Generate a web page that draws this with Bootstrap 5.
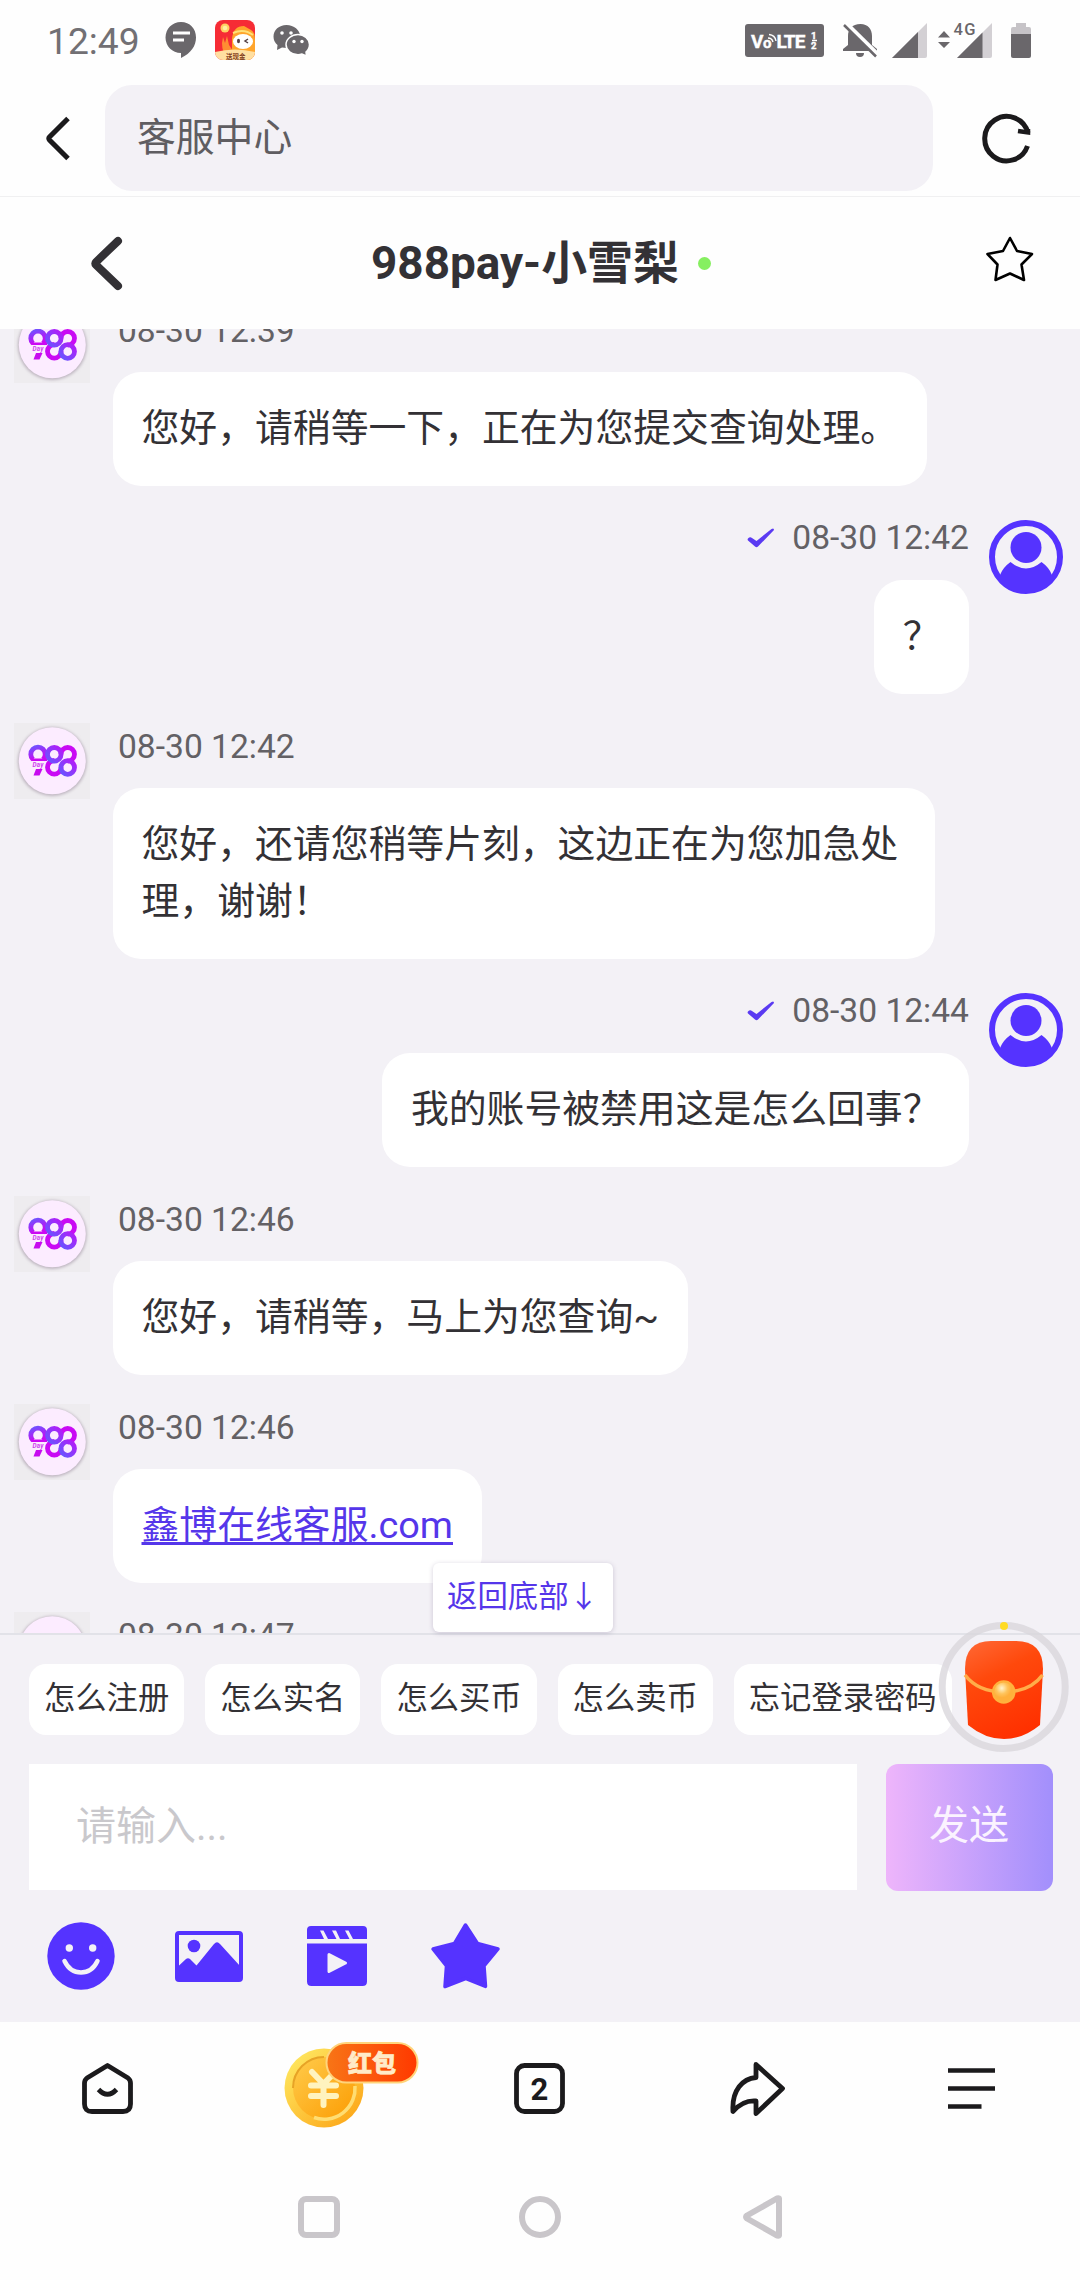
<!DOCTYPE html>
<html lang="zh-CN">
<head>
<meta charset="utf-8">
<meta name="viewport" content="width=device-width, initial-scale=1">
<title>客服中心</title>
<link href="https://cdn.jsdelivr.net/npm/bootstrap@5.3.0/dist/css/bootstrap.min.css" rel="stylesheet">
<style>
:root{--ink:#333135;--brand:#5533ff;--panel:#f3f1f6;--dim:#6a676b}
body{width:1080px;height:2280px;overflow:hidden;background:#fefefe;color:var(--ink);font-family:Roboto,"Noto Sans CJK SC",sans-serif;line-height:1.5}
svg{display:block;flex:none;overflow:visible}
.status-bar{height:85px;padding:20px 49px 0 47px}
.status-time{font-size:37.2px;line-height:42px;padding-top:2px;color:#727074;width:118px}
.status-left,.status-right{height:40px}
.app-icon{margin:0 18px}
.icon-bell{margin-left:19px}
.icon-signal{margin-left:14px}
.icon-data{margin-left:11px}
.icon-battery{margin-left:19px}
.address-row{height:112px;padding-left:46px;border-bottom:1px solid #f0f0f1}
.address-pill{width:828px;height:106px;margin-left:35px;margin-right:49px;border-radius:27px;background:var(--panel);padding-left:32px;font-size:38.8px;line-height:106px;color:#5f5d61}
.address-back{margin-top:32px}
.address-reload{margin-top:28px}
.chat-head{height:132px}
.chat-head .head-back{margin-left:91px;width:280px}
.chat-title{font-size:45.9px;font-weight:700;line-height:132px;width:327px}
.online-dot{width:13px;height:13px;border-radius:50%;background:#86ef60}
.chat-head .head-star{margin-left:275px;margin-top:-9px}
.chat-log{height:1304px;background:var(--panel);overflow:hidden}
.chat-flow{margin-top:-22px;gap:29px}
.msg-in{padding-left:14px;gap:23px}
.msg-out{padding-right:17px;gap:20px}
.msg-out>svg{margin-top:5px}
.msg-time{height:46px;line-height:48px;font-size:33.6px;color:#636165;margin-bottom:19px}
.msg-in .msg-time{padding-left:5px}
.msg-out .msg-time{gap:17px}
.bubble{background:#fff;border-radius:28px;padding:28.5px;font-size:37.85px;line-height:57px;max-width:822px;width:max-content}
.bubble span,.bubble a{position:relative;top:-1px}
.bubble a{color:#5536ea;text-decoration-thickness:3px;text-underline-offset:4px;text-decoration-skip-ink:none}
.chat-panel{height:389px;background:var(--panel);border-top:2px solid #e2e2e8;padding:29px 27px 0 29px}
.to-bottom{left:433px;top:1563px;width:180px;height:69px;border-radius:6px;box-shadow:0 1px 5px rgba(60,40,90,.22);font-size:30.4px;line-height:67px;color:#5536ea;padding-left:14px}
.quick{gap:21px;font-size:31.3px;white-space:nowrap}
.quick div{background:#fff;border-radius:17px;height:71px;line-height:69px;padding:0 15px}
.entry{margin-top:29px;gap:29px}
.entry-box{width:828px;height:126px;background:#fff;padding:0 0 0 47px;font-size:40px;line-height:126px;color:#c9c8cc}
.send-btn{width:167px;height:127px;border:0;border-radius:12px;background:linear-gradient(90deg,#eeb5fb,#a28ffc);color:#fbf3ff;font-size:40px;line-height:122px;padding:0 1px 4px 0}
.tools{margin-top:31px;padding-left:18px;height:68px}
.tool-photo{margin-left:60px}
.tool-video,.tool-star{margin-left:64px}
.app-nav{height:124px;padding:0 0 0 82px}
.nav-home{margin-top:41px}
.nav-coin{margin:20px 0 0 151px}
.nav-tabs-count{margin:41px 0 0 95px}
.nav-share{margin:40px 0 0 165px}
.nav-menu{margin:46px 0 0 162px}
.sys-nav{height:134px;padding:50px 0 0 298px}
.sys-home{margin-left:179px}
.sys-back{margin-left:182px}
.red-pack{left:939px;top:1622px}
svg text{font-family:Roboto,"Noto Sans CJK SC",sans-serif}
</style>
</head>
<body class="position-relative">
<svg width="0" height="0" class="position-absolute">
  <defs>
    <linearGradient id="gRingA" x1="0" y1="0" x2=".4" y2="1"><stop offset="0" stop-color="#7052ff"/><stop offset="1" stop-color="#cb08f2"/></linearGradient>
    <linearGradient id="gRingB" x1="1" y1="0" x2="0" y2="1"><stop offset="0" stop-color="#b51af8"/><stop offset="1" stop-color="#6657ff"/></linearGradient>
    <filter id="soft" x="-20%" y="-20%" width="140%" height="140%"><feGaussianBlur stdDeviation="1.5"/></filter>
    <symbol id="avatar988" viewBox="0 0 76 76">
      <rect width="76" height="76" fill="#eeecef"/>
      <circle cx="38.3" cy="38.5" r="34.5" fill="#bdb4bf" filter="url(#soft)"/>
      <circle cx="38.3" cy="37.7" r="33.500" fill="#fcecff"/>
      <g fill="none" stroke-width="4.800">
        <path d="M40.300 37.500A6.800 6.800 0 1 0 47.100 44.300" stroke="#c90af4"/>
        <path d="M46.900 31.300A6.800 6.800 0 1 1 53.700 38.100" stroke="#c90af4"/>
        <path d="M53.700 37.800Q49 38 46.900 43.500" stroke="#a428fa" stroke-width="3"/>
        <circle cx="53.700" cy="44.500" r="6.800" stroke="url(#gRingB)"/>
        <path d="M19 36.500A7.200 7.200 0 1 1 29 36.500" stroke="url(#gRingA)"/>
        <circle cx="40.300" cy="31.300" r="6.800" stroke="url(#gRingB)"/>
      </g>
      <path d="M16.500 35.500H33V38H18z" fill="#cb08f2"/>
      <path d="M22 46h6.500l-3 6.500h-6z" fill="#c70bef"/>
      <text x="18.400" y="44" font-size="6.500" font-style="italic" font-weight="700" fill="#cf45ee" textLength="11">Day</text>
    </symbol>
    <symbol id="userIcon" viewBox="0 0 74 74">
      <clipPath id="cUser"><circle cx="37" cy="37" r="36"/></clipPath>
      <circle cx="37" cy="37" r="34" fill="none" stroke="#5533ff" stroke-width="6"/>
      <circle cx="37" cy="27.500" r="15.500" fill="#5533ff"/>
      <path clip-path="url(#cUser)" d="M9 61 11.500 54Q14.500 47 21.500 42Q37 55 52.500 42Q59.500 47 62.500 54L65 61V74H9z" fill="#5533ff"/>
    </symbol>
    <symbol id="tick" viewBox="0 0 28 20"><path d="M1 10.500Q3 8.500 5 10L9.500 13 24.500 1Q27-.5 27 2L11 18.500Q9.500 20 8 18.500L1 12.500Q.2 11.500 1 10.500z" fill="#5a3af2"/></symbol>
  </defs>
</svg>

<header class="status-bar d-flex justify-content-between">
  <div class="status-left d-flex align-items-center">
    <div class="status-time">12:49</div>
    <svg width="32" height="36" viewBox="0 0 32 36"><path d="M16 0C25 0 31 6.500 31 15.500C31 24 26 31 16 36V31C7 31 .5 24 .5 15.500S7 0 16 0z" fill="#6a676b"/><path d="M8 11H25M8 18H19" stroke="#fff" stroke-width="3"/></svg>
    <svg class="app-icon" width="40" height="40" viewBox="0 0 40 40"><clipPath id="cApp"><rect width="40" height="40" rx="8"/></clipPath><g clip-path="url(#cApp)"><path fill="#f62c35" d="M0 0h40v40H0z"/><circle cx="10" cy="8" r="4.500" fill="#ffd264"/><circle cx="10" cy="8" r="2.300" fill="#fff1a2"/><path d="M17 40V19Q18 6 29 6L36 10Q40 12 40 20V40z" fill="#ffa52c"/><path d="M7 23 8 17 10 23 12 16 14 25 22 37H13Q7 34 7 23z" fill="#ff8e32"/><path d="M18 13Q29 8 38 15" fill="none" stroke="#ffe078" stroke-width="2"/><ellipse cx="28" cy="21.500" rx="10" ry="7.500" fill="#fff"/><ellipse cx="23.500" cy="21" rx="1.500" ry="2.300" fill="#554247"/><path d="M33 19 30 21 33 23" stroke="#554247" stroke-width="1.500" fill="none"/><path d="M0 32Q20 27 40 32V40H0z" fill="#ffdfa1"/><text x="11" y="38.500" font-size="6.500" font-weight="700" fill="#843e20">送现金</text></g></svg>
    <svg width="37" height="31" viewBox="0 0 37 31"><path fill="#6a676b" d="M13.500 0C21 0 27 5 27 11S21 23 13.500 23L9 22.500 4 25 4.500 20Q.5 17 .5 11.500C.5 5 6 0 13.500 0z"/><path fill="#6a676b" stroke="#fff" stroke-width="1.500" d="M25 9.500C31 9.500 36.500 14 36.500 19.500Q36.500 24 33 27L33.500 31 29 29Q27 29.800 25 29.800C18.500 29.800 13 25 13 19.600S18.500 9.500 25 9.500z"/><g fill="#fff"><circle cx="9" cy="8" r="1.800"/><circle cx="18" cy="8" r="1.800"/><circle cx="21" cy="16.500" r="1.700"/><circle cx="29" cy="16.500" r="1.700"/></g></svg>
  </div>
  <div class="status-right d-flex align-items-center">
    <svg width="79" height="33" viewBox="0 0 79 33"><rect width="79" height="33" rx="3" fill="#6a676b"/><g fill="#fff" stroke="#fff" stroke-width=".4" font-weight="700"><text x="6" y="24" font-size="19" textLength="12">V</text><text x="18" y="24" font-size="15">o</text><text x="31.500" y="24" font-size="19" textLength="29">LTE</text><text x="66" y="15" font-size="9.500">1</text><text x="66" y="25" font-size="9.500">2</text></g><path d="M67 16.500H72M23 14Q27 14 28 18M24 10.500Q30 11 31 17" stroke="#fff" fill="none" stroke-width="1.400"/></svg>
    <svg class="icon-bell" width="35" height="35" viewBox="0 0 35 35"><path d="M17.500 1C25 1 29 6 29 13V22L34 26V28H0V26L5 22V13C5 6 9 1 17.500 1zM13 30H21Q21 34 17 34T13 30z" fill="#6a676b"/><path d="M3 0 35 31.500" stroke="#fff" stroke-width="4"/><path d="M1 2 33 33.500" stroke="#6a676b" stroke-width="2.500"/></svg>
    <svg class="icon-signal" width="35" height="35" viewBox="0 0 35 35"><path d="M0 35 35 0V33Q35 35 33 35z" fill="#d3d0d4"/><path d="M0 35 26 9V35z" fill="#6a676b"/></svg>
    <svg class="icon-data" width="54" height="35" viewBox="0 0 54 35"><path d="M0 14.500 6 8 12 14.500zM0 19H12L6 25z" fill="#6a676b"/><path d="M19 35 54 0V33Q54 35 52 35z" fill="#d3d0d4"/><path d="M19 35 44.500 9.500V35z" fill="#6a676b"/><text x="15.500" y="12" font-size="16.500" font-weight="500" fill="#6a676b" stroke="#fff" stroke-width="3" paint-order="stroke" textLength="22">4G</text></svg>
    <svg class="icon-battery" width="20" height="35" viewBox="0 0 20 35"><path d="M5 0H15V4H18Q20 4 20 6V12H0V6Q0 4 2 4H5z" fill="#c6c3c7"/><path d="M0 11H20V33Q20 35 18 35H2Q0 35 0 33z" fill="#6a676b"/></svg>
  </div>
</header>

<div class="address-row d-flex align-items-start">
  <svg class="address-back" width="24" height="43" viewBox="0 0 24 43"><path d="M22 1.500 3.500 20Q2.200 21.500 3.500 23L22 41.500" fill="none" stroke="#1b1a1c" stroke-width="5"/></svg>
  <div class="address-pill">客服中心</div>
  <svg class="address-reload" width="49" height="49" viewBox="0 0 49 49"><path d="M45.500 33A22 22.200 0 1 1 46 20" fill="none" stroke="#1b1a1c" stroke-width="5"/><path d="M36 18 46 19.500V16" fill="none" stroke="#1b1a1c" stroke-width="4.500"/></svg>
</div>

<div class="chat-head d-flex align-items-center">
  <div class="head-back"><svg width="31" height="53" viewBox="0 0 31 53"><path d="M27 4 5 25Q3.500 26.500 5 28L27 49" fill="none" stroke="#333135" stroke-width="8" stroke-linecap="round"/></svg></div>
  <div class="chat-title text-nowrap">988pay-小雪梨</div>
  <div class="online-dot"></div>
  <svg class="head-star" width="48" height="46" viewBox="0 0 48 46"><path d="M24 2 31 15 46 18 35.500 28.500 38 44 24 37.500 9.500 44 11.500 28.500 1.500 18 17 15z" fill="none" stroke="#000" stroke-width="2.600" stroke-linejoin="round"/></svg>
</div>

<main class="chat-log">
  <div class="chat-flow d-flex flex-column">
    <div class="msg-in d-flex"><svg width="76" height="76"><use href="#avatar988"/></svg><div><div class="msg-time">08-30 12:39</div><div class="bubble"><span>您好，请稍等一下，正在为您提交查询处理。</span></div></div></div>
    <div class="msg-out d-flex justify-content-end"><div class="d-flex flex-column align-items-end"><div class="msg-time d-flex align-items-center"><svg width="28" height="20"><use href="#tick"/></svg>08-30 12:42</div><div class="bubble"><span>？</span></div></div><svg width="74" height="74"><use href="#userIcon"/></svg></div>
    <div class="msg-in d-flex"><svg width="76" height="76"><use href="#avatar988"/></svg><div><div class="msg-time">08-30 12:42</div><div class="bubble"><span>您好，还请您稍等片刻，这边正在为您加急处理，谢谢！</span></div></div></div>
    <div class="msg-out d-flex justify-content-end"><div class="d-flex flex-column align-items-end"><div class="msg-time d-flex align-items-center"><svg width="28" height="20"><use href="#tick"/></svg>08-30 12:44</div><div class="bubble"><span>我的账号被禁用这是怎么回事？</span></div></div><svg width="74" height="74"><use href="#userIcon"/></svg></div>
    <div class="msg-in d-flex"><svg width="76" height="76"><use href="#avatar988"/></svg><div><div class="msg-time">08-30 12:46</div><div class="bubble"><span>您好，请稍等，马上为您查询~</span></div></div></div>
    <div class="msg-in d-flex"><svg width="76" height="76"><use href="#avatar988"/></svg><div><div class="msg-time">08-30 12:46</div><div class="bubble"><a href="#">鑫博在线客服.com</a></div></div></div>
    <div class="msg-in d-flex"><svg width="76" height="76"><use href="#avatar988"/></svg><div><div class="msg-time">08-30 12:47</div></div></div>
  </div>
</main>

<section class="chat-panel">
  <div class="quick d-flex"><div>怎么注册</div><div>怎么实名</div><div>怎么买币</div><div>怎么卖币</div><div>忘记登录密码</div></div>
  <div class="entry d-flex">
    <div class="entry-box">请输入...</div>
    <button class="send-btn btn">发送</button>
  </div>
  <div class="tools d-flex align-items-center">
    <svg width="68" height="68" viewBox="0 0 68 68"><circle cx="34" cy="34" r="33.700" fill="#5533ff"/><g fill="#f3f1f6"><circle cx="22.300" cy="26" r="3.700"/><circle cx="45.700" cy="26" r="3.700"/></g><path d="M17.500 39Q23 50.500 34 50.500T50.500 39" fill="none" stroke="#f3f1f6" stroke-width="4.500" stroke-linecap="round"/></svg>
    <svg class="tool-photo" width="68" height="51" viewBox="0 0 68 51"><rect x="2" y="2" width="64" height="47" rx="2" fill="none" stroke="#5533ff" stroke-width="4"/><circle cx="19" cy="15" r="6.300" fill="#5533ff"/><path d="M3 35.500 11 28Q13 26.500 15 28L21.500 34.500 39 13Q42 9.500 45 13L65 35V49H3z" fill="#5533ff"/></svg>
    <svg class="tool-video" width="60" height="60" viewBox="0 0 60 60"><path d="M4 0H56Q60 0 60 4V13H46L41.500 4.500H38L42.500 13H33L29 4.500H25L29.500 13H21L16.500 4.500H13L17 13H0V4Q0 0 4 0zM0 17.500H60V55.500Q60 60 55.500 60H4.500Q0 60 0 55.500z" fill="#5533ff"/><path d="M22 28.500 38.500 37 22 45.500z" fill="#f3f1f6" stroke="#f3f1f6" stroke-width="3" stroke-linejoin="round"/></svg>
    <svg class="tool-star" width="69" height="66" viewBox="0 0 69 66"><path d="M34.500 2 46.500 20.500 67 26 53 43 54.500 63.500 34.500 55.500 14 63.500 15.500 43 2 26 23.500 20.500z" fill="#5533ff" stroke="#5533ff" stroke-width="3.500" stroke-linejoin="round"/></svg>
  </div>
</section>

<nav class="app-nav d-flex align-items-start">
  <svg class="nav-home" width="51" height="51" viewBox="0 0 51 51"><path d="M25.500 2.500 46 15Q48.500 17 48.500 20V41Q48.500 48.500 41 48.500H10Q2.500 48.500 2.500 41V20Q2.500 17 5 15zM16.500 26.500Q25.500 36 34.500 26.500" fill="none" stroke="#1b1a1c" stroke-width="4.800" stroke-linejoin="round"/></svg>
  <svg class="nav-coin" width="135" height="86" viewBox="0 0 135 86">
    <defs><linearGradient id="gCoin" x1="0" y1="0" x2="1" y2="1"><stop stop-color="#ffee68"/><stop offset="1" stop-color="#fca011"/></linearGradient><linearGradient id="gCoin2" x1="0" y1="0" x2="1" y2="1"><stop stop-color="#ffcc4c"/><stop offset="1" stop-color="#fc9c02"/></linearGradient><linearGradient id="gBadge"><stop stop-color="#f87516"/><stop offset="1" stop-color="#ff3900"/></linearGradient></defs>
    <circle cx="40" cy="46" r="39.500" fill="url(#gCoin)"/><circle cx="40" cy="46" r="31" fill="url(#gCoin2)"/><path d="M9 46A31 31 0 0 1 40 15" fill="none" stroke="#e7a326" stroke-width="2"/><path d="M71 44A31 31 0 0 1 30 75.500" fill="none" stroke="#ffdd72" stroke-width="3.500"/>
    <path d="M28 30 39.500 42 51 30M27 43.500H52M27 54H52M39.500 43V63" fill="none" stroke="#fff3bf" stroke-width="6" stroke-linecap="round" stroke-linejoin="round"/>
    <rect x="42.500" y="1" width="91" height="39.500" rx="19.750" fill="url(#gBadge)" stroke="#ffd47b" stroke-width="2"/>
    <text x="64" y="30" font-size="24" font-weight="900" fill="#ffebc8" stroke="#ffebc8" stroke-width=".7">红包</text>
  </svg>
  <svg class="nav-tabs-count" width="51" height="51" viewBox="0 0 51 51"><rect x="2.500" y="2.500" width="46" height="46" rx="8" fill="none" stroke="#1b1a1c" stroke-width="4.800"/><text x="25.500" y="36.500" text-anchor="middle" font-size="31" font-weight="700" fill="#1b1a1c">2</text></svg>
  <svg class="nav-share" width="56" height="54" viewBox="0 0 56 54"><path d="M26 2.500 52.500 26.500 26 51.500V39Q13 38 3 49.500C1.500 28 13 16.500 26 15.500z" fill="none" stroke="#1b1a1c" stroke-width="4.800" stroke-linejoin="round"/></svg>
  <svg class="nav-menu" width="47" height="42" viewBox="0 0 47 42"><path d="M0 2.500H47M0 20.500H47M0 38.500H33.500" stroke="#1b1a1c" stroke-width="4.600"/></svg>
</nav>

<footer class="sys-nav d-flex align-items-start">
  <svg width="42" height="42" viewBox="0 0 42 42"><rect x="3" y="3" width="36" height="36" rx="5" fill="none" stroke="#c9c6ca" stroke-width="6"/></svg>
  <svg class="sys-home" width="42" height="42" viewBox="0 0 42 42"><circle cx="21" cy="21" r="18" fill="none" stroke="#c9c6ca" stroke-width="6"/></svg>
  <svg class="sys-back" width="39" height="42" viewBox="0 0 39 42"><path d="M36 2.500V39.500Q35 40 33 39L4 22.500Q2 21 4 19.500L33 3Q35 2 36 2.500z" fill="none" stroke="#c9c6ca" stroke-width="6" stroke-linejoin="round"/></svg>
</footer>

<a class="to-bottom position-absolute bg-white text-decoration-none text-nowrap">返回底部↓</a>
<svg class="red-pack position-absolute" width="130" height="130" viewBox="0 0 130 130">
  <defs><linearGradient id="gPack" x1=".2" y1="0" x2=".6" y2="1"><stop stop-color="#ff642f"/><stop offset=".35" stop-color="#ff490c"/><stop offset="1" stop-color="#ff3000"/></linearGradient><radialGradient id="gKnob" cx=".4" cy=".3"><stop stop-color="#fff4cf"/><stop offset=".6" stop-color="#ffc45c"/><stop offset="1" stop-color="#ffb03b"/></radialGradient></defs>
  <circle cx="64.700" cy="65" r="61.500" fill="none" stroke="#d8d6db" stroke-opacity=".78" stroke-width="7"/>
  <circle cx="65" cy="4" r="4" fill="#ffdb23"/>
  <path d="M26 47Q26 19 52 19H77Q104 19 104 47L101 103Q84 117 65 117T29 103z" fill="url(#gPack)"/>
  <path d="M26 53Q39 70 65 70T103.500 53" fill="none" stroke="#ffad49" stroke-width="3.500"/>
  <circle cx="64.700" cy="70" r="11.800" fill="#ffb23e"/><circle cx="64.700" cy="70" r="9.500" fill="url(#gKnob)"/>
</svg>
<script src="https://cdn.jsdelivr.net/npm/bootstrap@5.3.0/dist/js/bootstrap.bundle.min.js"></script>
</body>
</html>
